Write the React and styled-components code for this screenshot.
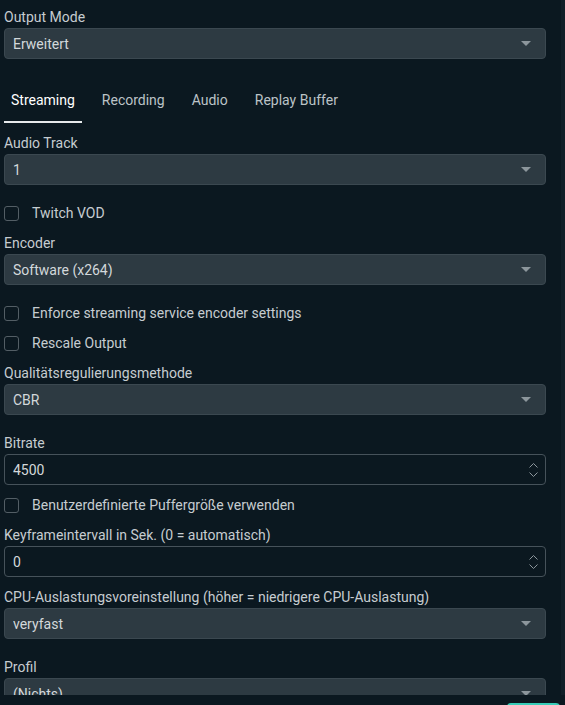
import React from "react";
import styled, { createGlobalStyle } from "styled-components";

const Global = createGlobalStyle`
  html, body { margin: 0; padding: 0; background: #0b1820; }
  body { font-family: Roboto, "Liberation Sans", sans-serif; }
`;

const Window = styled.div`
  width: 565px;
  height: 705px;
  background: #0b1820;
  display: flex;
  flex-direction: column;
  overflow: hidden;
`;

const ScrollArea = styled.div`
  height: 695px;
  flex-shrink: 0;
  display: flex;
  align-items: flex-start;
  overflow: hidden;
`;

const Content = styled.div`
  flex: 1;
  padding: 7px 15px 0 4px;
  display: flex;
  flex-direction: column;
  gap: 10px;
  & > * { flex-shrink: 0; }
`;

const Track = styled.div`
  width: 4px;
  align-self: stretch;
  background: #111f28;
`;

const Footer = styled.div`
  flex: 1;
  display: flex;
  justify-content: flex-end;
  padding: 8px 5px 0 0;
  overflow: hidden;
`;

const AccentButton = styled.div`
  width: 53px;
  height: 30px;
  border-radius: 4px;
  background: #38cdb8;
  flex-shrink: 0;
`;

const Field = styled.div`
  display: flex;
  flex-direction: column;
  gap: 1px;
  margin-bottom: ${(p) => (p.$combo ? 8 : 0)}px;
`;

const Label = styled.div`
  font-size: 14px;
  line-height: 20px;
  height: 20px;
  color: #c6ccd0;
  white-space: nowrap;
`;

const Control = styled.div`
  height: 31px;
  box-sizing: border-box;
  border-radius: 4px;
  border: 1px solid ${(p) => (p.$spin ? "#46525a" : "#3b4850")};
  background: ${(p) => (p.$spin ? "#0b1820" : "#2d3a42")};
  display: flex;
  align-items: center;
  padding: 0 14px 0 8px;
  font-size: 14px;
  color: #d3d8db;
`;

const Value = styled.span`
  flex: 1;
  white-space: nowrap;
  overflow: hidden;
`;

const Tabs = styled.div`
  height: 46px;
  display: flex;
  gap: 13px;
`;

const Tab = styled.div`
  padding: 2px 7px 0;
  display: flex;
  align-items: center;
  font-size: 14px;
  color: ${(p) => (p.$active ? "#ffffff" : "#bcc3c7")};
  border-bottom: 2px solid ${(p) => (p.$active ? "#e6e9eb" : "transparent")};
`;

const CheckRow = styled.label`
  height: 20px;
  display: flex;
  align-items: center;
  gap: 13px;
  font-size: 14px;
  color: #c6ccd0;
  white-space: nowrap;
`;

const Box = styled.span`
  width: 15px;
  height: 15px;
  box-sizing: border-box;
  border: 1px solid #535e65;
  border-radius: 3px;
  flex-shrink: 0;
`;

const Arrow = () => (
  <svg width="10" height="5" viewBox="0 0 10 5">
    <path d="M0 0H10L5 5Z" fill="#8c969c" />
  </svg>
);

const Spin = () => (
  <svg width="9" height="16" viewBox="0 0 9 16" style={{ marginRight: -7 }}>
    <path d="M0.5 5.5L4.5 1.5L8.5 5.5" fill="none" stroke="#8c969c" strokeWidth="1" />
    <path d="M0.5 10.5L4.5 14.5L8.5 10.5" fill="none" stroke="#8c969c" strokeWidth="1" />
  </svg>
);

const Combo = ({ label, value }) => (
  <Field $combo>
    <Label>{label}</Label>
    <Control>
      <Value>{value}</Value>
      <Arrow />
    </Control>
  </Field>
);

const SpinField = ({ label, value }) => (
  <Field>
    <Label>{label}</Label>
    <Control $spin>
      <Value>{value}</Value>
      <Spin />
    </Control>
  </Field>
);

const Check = ({ children }) => (
  <CheckRow>
    <Box />
    {children}
  </CheckRow>
);

export default function App() {
  return (
    <Window>
      <Global />
      <ScrollArea>
        <Content>
          <Combo label="Output Mode" value="Erweitert" />
          <Tabs>
            <Tab $active>Streaming</Tab>
            <Tab>Recording</Tab>
            <Tab>Audio</Tab>
            <Tab>Replay Buffer</Tab>
          </Tabs>
          <Combo label="Audio Track" value="1" />
          <Check>Twitch VOD</Check>
          <Combo label="Encoder" value="Software (x264)" />
          <Check>Enforce streaming service encoder settings</Check>
          <Check>Rescale Output</Check>
          <Combo label="Qualitätsregulierungsmethode" value="CBR" />
          <SpinField label="Bitrate" value="4500" />
          <Check>Benutzerdefinierte Puffergröße verwenden</Check>
          <SpinField label="Keyframeintervall in Sek. (0 = automatisch)" value="0" />
          <Combo
            label="CPU-Auslastungsvoreinstellung (höher = niedrigere CPU-Auslastung)"
            value="veryfast"
          />
          <Combo label="Profil" value="(Nichts)" />
        </Content>
        <Track />
      </ScrollArea>
      <Footer>
        <AccentButton />
      </Footer>
    </Window>
  );
}
